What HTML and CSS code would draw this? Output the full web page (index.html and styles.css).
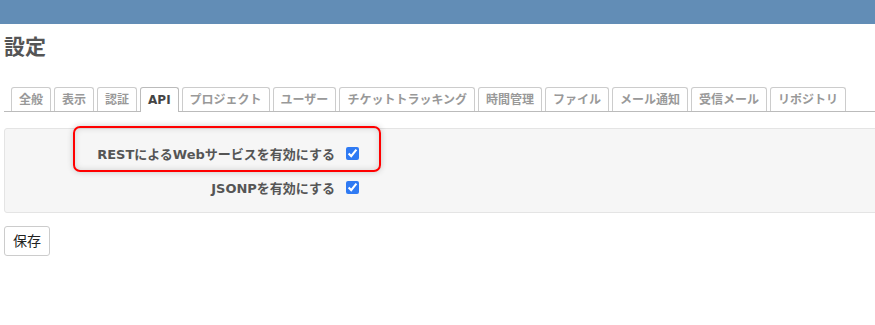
FILE: index.html
```html
<!DOCTYPE html>
<html lang="ja">
<head>
  <meta charset="UTF-8">
  <title>設定</title>
  <link rel="stylesheet" href="styles.css">
</head>
<body>

<div id="header"></div>

<div id="content">
  <h2>設定</h2>

  <!-- タブ -->
  <div class="tabs">
    <ul>
      <li><a href="#">全般</a></li>
      <li><a href="#">表示</a></li>
      <li><a href="#">認証</a></li>
      <li><a href="#" class="selected">API</a></li>
      <li><a href="#">プロジェクト</a></li>
      <li><a href="#">ユーザー</a></li>
      <li><a href="#">チケットトラッキング</a></li>
      <li><a href="#">時間管理</a></li>
      <li><a href="#">ファイル</a></li>
      <li><a href="#">メール通知</a></li>
      <li><a href="#">受信メール</a></li>
      <li><a href="#">リポジトリ</a></li>
    </ul>
  </div>

  <form>
    <div class="box tabular">
      <p>
        <label for="rest_api">RESTによるWebサービスを有効にする</label>
        <input type="checkbox" id="rest_api" checked>
      </p>
      <p>
        <label for="jsonp">JSONPを有効にする</label>
        <input type="checkbox" id="jsonp" checked>
      </p>
    </div>
    <input type="submit" class="btn-save" value="保存">
  </form>

  <!-- 強調枠 -->
  <div class="highlight"></div>
</div>

</body>
</html>
```

FILE: styles.css
```css
* {
  margin: 0;
  padding: 0;
  box-sizing: border-box;
}

body {
  font-family: "DejaVu Sans", "Noto Sans CJK JP", sans-serif;
  font-size: 12px;
  color: #333;
  background: #fff;
  overflow: hidden;
}

#header {
  height: 24px;
  background: #628db6;
}

#content {
  position: relative;
  padding: 11px 0 0 4px;
}

h2 {
  font-size: 21px;
  line-height: 24px;
  color: #555;
  font-weight: bold;
}

.tabs {
  margin-top: 28px;
}

.tabs ul {
  list-style: none;
  display: flex;
  gap: 3px;
  padding-left: 7px;
  border-bottom: 1px solid #bbb;
}

.tabs ul li a {
  display: block;
  padding: 4px 7px 3px;
  line-height: 16px;
  font-size: 12px;
  font-weight: bold;
  color: #999;
  text-decoration: none;
  background: #fff;
  border: 1px solid #ccc;
  border-bottom: none;
  border-radius: 3px 3px 0 0;
}

.tabs ul li a.selected {
  color: #444;
  border-color: #bbb;
  padding-bottom: 4px;
  margin-bottom: -1px;
}

.box {
  margin-top: 16px;
  margin-right: -10px;
  padding: 7px 0 8px;
  background: #f6f6f6;
  border: 1px solid #e4e4e4;
  border-radius: 3px;
}

.tabular p {
  display: flex;
  align-items: center;
  height: 34px;
}

.tabular label {
  width: 330px;
  text-align: right;
  font-size: 13px;
  font-weight: bold;
  color: #555;
}

.tabular input[type="checkbox"] {
  width: 13px;
  height: 13px;
  margin: 0 0 0 11px;
  accent-color: #2f7af3;
}

.btn-save {
  margin-top: 13px;
  padding: 6px 8px;
  font-family: "DejaVu Sans", "Noto Sans CJK JP", sans-serif;
  font-size: 14px;
  line-height: 16px;
  color: #222;
  background: #fff;
  border: 1px solid #ccc;
  border-radius: 3px;
  cursor: pointer;
}

.highlight {
  position: absolute;
  left: 73px;
  top: 102px;
  width: 308px;
  height: 46px;
  border: 2px solid #f00;
  border-radius: 7px;
  box-shadow: 0 0 6px rgba(0,0,0,0.2), inset 0 0 6px rgba(0,0,0,0.15);
}
```
